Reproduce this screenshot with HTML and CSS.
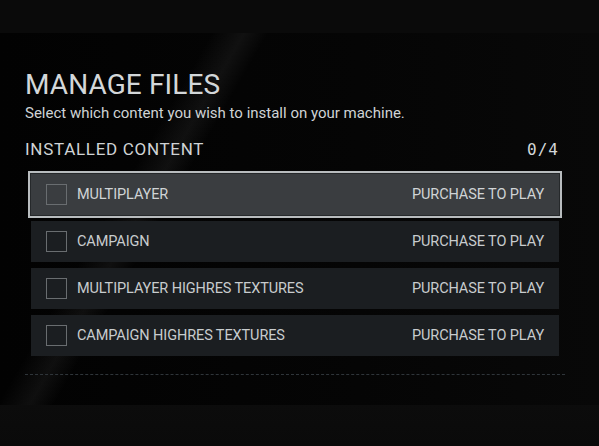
FILE: index.html
```html
<!DOCTYPE html>
<html>
<head>
<meta charset="utf-8">
<link rel="stylesheet" href="styles.css">
</head>
<body>
<div class="screen">
  <div class="topband"></div>
  <main class="main">
    <h1 class="title">MANAGE FILES</h1>
    <p class="subtitle">Select which content you wish to install on your machine.</p>
    <div class="section-head">
      <span class="section-title">INSTALLED CONTENT</span>
      <span class="count">0/4</span>
    </div>
    <ul class="list">
      <li class="row selected"><span class="check"></span><span class="name">MULTIPLAYER</span><span class="status">PURCHASE TO PLAY</span></li>
      <li class="row"><span class="check"></span><span class="name">CAMPAIGN</span><span class="status">PURCHASE TO PLAY</span></li>
      <li class="row"><span class="check"></span><span class="name">MULTIPLAYER HIGHRES TEXTURES</span><span class="status">PURCHASE TO PLAY</span></li>
      <li class="row"><span class="check"></span><span class="name">CAMPAIGN HIGHRES TEXTURES</span><span class="status">PURCHASE TO PLAY</span></li>
    </ul>
    <div class="divider"></div>
  </main>
  <div class="bottomband"></div>
</div>
</body>
</html>
```
FILE: styles.css
```css
* { box-sizing: border-box; }
html, body { margin: 0; padding: 0; }
body {
  background: #030303;
  font-family: Roboto, "Liberation Sans", sans-serif;
  color: #cdd1d3;
  width: 599px;
  height: 446px;
  overflow: hidden;
}
.screen {
  display: flex;
  flex-direction: column;
  height: 446px;
}
.topband {
  height: 33px;
  background: #0a0a0a;
  flex: none;
}
.main {
  flex: none;
  height: 372px;
  padding: 35px 34px 0 25px;
  background:
    linear-gradient(120deg, transparent 26%, rgba(255,255,255,0.05) 30%, transparent 33%, transparent 100%),
    linear-gradient(90deg, #020202 0%, #050505 60%, #080808 100%);
}
.bottomband {
  flex: 1;
  background: linear-gradient(180deg, #0c0c0c, #0a0a0a);
}
.title {
  margin: 0;
  font-size: 28px;
  font-weight: 400;
  line-height: 34px;
  color: #d3d7d9;
  letter-spacing: 0.1px;
}
.subtitle {
  margin: 2px 0 0 0;
  font-size: 15px;
  line-height: 18px;
  color: #cfd3d5;
}
.section-head {
  display: flex;
  justify-content: space-between;
  align-items: baseline;
  margin-top: 16px;
  margin-right: 6px;
}
.section-title {
  font-size: 17px;
  line-height: 22px;
  letter-spacing: 0.7px;
  color: #cfd3d5;
}
.count {
  font-family: "DejaVu Sans Mono", monospace;
  font-size: 16px;
  letter-spacing: 1px;
  color: #d3d7d9;
}
.list {
  list-style: none;
  margin: 14px 0 0 0;
  padding: 0 6px;
  display: flex;
  flex-direction: column;
  gap: 6px;
}
.row {
  height: 41px;
  background: #1b1e21;
  display: flex;
  align-items: center;
  padding: 0 15px 0 15px;
  font-size: 14.5px;
  color: #c8ccce;
}
.row.selected {
  margin: 0 -3px;
  height: 47px;
  margin-top: -3px;
  margin-bottom: -3px;
  padding: 0 16px 0 16px;
  background: #3a3d40;
  border: 2px solid #b8bcbe;
  box-shadow: inset 0 0 0 1px #26292b;
  color: #d0d4d6;
}
.check {
  width: 21px;
  height: 21px;
  border: 1px solid #696d70;
  flex: none;
}
.name {
  margin-left: 10px;
  flex: 1;
  letter-spacing: -0.1px;
}
.status {
  letter-spacing: -0.1px;
}
.divider {
  margin-top: 18px;
  border-top: 1px dashed #2f353a;
}
```
